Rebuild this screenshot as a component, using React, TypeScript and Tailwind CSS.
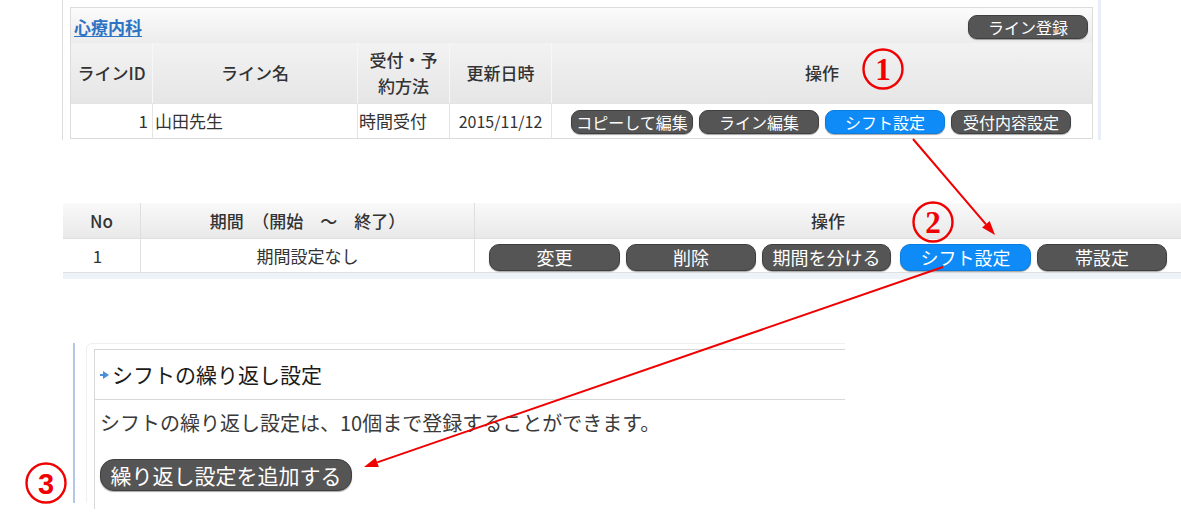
import React from "react";

const font = { fontFamily: '"Noto Sans CJK JP", "Noto Sans", sans-serif' };

function Btn({ children, blue, className = "" }: { children: React.ReactNode; blue?: boolean; className?: string }) {
  return (
    <div
      className={
        "flex items-center justify-center text-white whitespace-nowrap leading-none shadow-[0_1px_1px_rgba(0,0,0,0.35)] " +
        (blue ? "bg-[#0e8bf6] border border-[#0a7de0] " : "bg-[#555555] border border-[#3f3f3f] ") +
        className
      }
    >
      {children}
    </div>
  );
}

function Overlay() {
  return (
    <svg className="absolute left-0 top-0 pointer-events-none" width={1181} height={526} viewBox="0 0 1181 526">
      <circle cx={883} cy={69} r={19.5} fill="none" stroke="#f00000" strokeWidth={2.4} />
      <text x={883} y={80} textAnchor="middle" fill="#f00000" fontSize={31} fontWeight={700} fontFamily='"Liberation Serif", serif'>1</text>
      <circle cx={933} cy={222} r={19.5} fill="none" stroke="#f00000" strokeWidth={2.4} />
      <text x={933} y={233} textAnchor="middle" fill="#f00000" fontSize={31} fontWeight={700} fontFamily='"Liberation Serif", serif'>2</text>
      <circle cx={46} cy={483} r={19.5} fill="none" stroke="#f00000" strokeWidth={2.4} />
      <text x={46} y={494} textAnchor="middle" fill="#f00000" fontSize={29} fontWeight={700} fontFamily='"Liberation Sans", sans-serif'>3</text>
      <line x1={913} y1={139} x2={986} y2={224.3} stroke="#f00000" strokeWidth={2} />
      <polygon points="995,235 982.1,227.55 989.7,221.05" fill="#f00000" />
      <line x1={943} y1={267} x2={377.2} y2={462.4} stroke="#f00000" strokeWidth={2} />
      <polygon points="364,467 375.6,457.7 378.8,467.1" fill="#f00000" />
    </svg>
  );
}

export default function App() {
  return (
    <div className="relative w-[1181px] h-[526px] bg-white overflow-hidden text-[#333]" style={font}>
      {/* Section 1 */}
      <div className="flex h-[140px]">
        <div className="w-[62px]" />
        <div className="w-px bg-[#dcdcdc]" />
        <div className="pl-[7px] pt-[7px]">
          <div className="w-[1023px] border border-[#dcdcdc] bg-white">
            <div className="h-[35px] flex items-center justify-between pl-[3px] pr-[4px] bg-gradient-to-b from-[#fbfbfb] to-[#ececec]">
              <a className="text-[17px] font-bold text-[#2d74c4] underline underline-offset-2 leading-none mt-[1px]">心療内科</a>
              <Btn className="w-[120px] h-[24px] rounded-[9px] text-[16px] mt-[3px]">ライン登録</Btn>
            </div>
            <div className="grid grid-cols-[81px_205px_92px_102px_1fr] h-[60px] bg-gradient-to-b from-[#f2f2f2] to-[#e6e6e6] text-[17px] font-medium text-[#333]">
              <div className="flex items-center justify-center">ラインID</div>
              <div className="flex items-center justify-center border-l border-[#f7f7f7]">ライン名</div>
              <div className="flex flex-col items-center justify-center border-l border-[#f7f7f7] leading-[26px]">
                <span>受付・予</span>
                <span>約方法</span>
              </div>
              <div className="flex items-center justify-center border-l border-[#f7f7f7]">更新日時</div>
              <div className="flex items-center justify-center border-l border-[#f7f7f7]">操作</div>
            </div>
            <div className="grid grid-cols-[81px_205px_92px_102px_1fr] h-[35px] text-[17px] border-t border-[#e4e4e4]">
              <div className="flex items-center justify-end pr-[4px]">1</div>
              <div className="flex items-center pl-[2px] border-l border-[#e4e4e4]">山田先生</div>
              <div className="flex items-center pl-[1px] border-l border-[#e4e4e4]">時間受付</div>
              <div className="flex items-center justify-center border-l border-[#e4e4e4] text-[16px]">2015/11/12</div>
              <div className="flex items-center pl-[19px] gap-[6px] border-l border-[#e4e4e4] pt-[2px]">
                <Btn className="w-[122px] h-[24px] rounded-[9px] text-[16px]">コピーして編集</Btn>
                <Btn className="w-[120px] h-[24px] rounded-[9px] text-[16px]">ライン編集</Btn>
                <Btn blue className="w-[120px] h-[24px] rounded-[9px] text-[16px]">シフト設定</Btn>
                <Btn className="w-[120px] h-[24px] rounded-[9px] text-[16px]">受付内容設定</Btn>
              </div>
            </div>
          </div>
        </div>
        <div className="ml-[5px] w-[3px] bg-[#e7eef8]" />
      </div>

      {/* Section 2 */}
      <div className="mt-[63px] ml-[63px] w-[1118px]">
        <div className="grid grid-cols-[77px_334px_1fr] h-[35px] bg-gradient-to-b from-[#f9f9f9] to-[#e9e9e9] text-[17px] font-medium text-[#333]">
          <div className="flex items-center justify-center">No</div>
          <div className="flex items-center justify-center border-l border-[#dedede]">期間　（開始　～　終了）</div>
          <div className="flex items-center justify-center border-l border-[#dedede]">操作</div>
        </div>
        <div className="grid grid-cols-[77px_334px_1fr] h-[35px] border-t border-[#e0e0e0] border-b text-[17px]">
          <div className="flex items-center justify-center pr-[8px]">1</div>
          <div className="flex items-center justify-center border-l border-[#e0e0e0]">期間設定なし</div>
          <div className="flex items-center pl-[14px] gap-[6px] border-l border-[#e0e0e0] pt-[3px]">
            <Btn className="w-[131px] h-[27px] rounded-[10px] text-[18px]">変更</Btn>
            <Btn className="w-[130px] h-[27px] rounded-[10px] text-[18px]">削除</Btn>
            <Btn className="w-[129px] h-[27px] rounded-[10px] text-[18px]">期間を分ける</Btn>
            <Btn blue className="w-[131px] h-[27px] rounded-[10px] text-[18px] ml-[3px]">シフト設定</Btn>
            <Btn className="w-[130px] h-[27px] rounded-[10px] text-[18px]">帯設定</Btn>
          </div>
        </div>
        <div className="h-[6px] bg-[#eef3fa]" />
      </div>

      {/* Section 3 */}
      <div className="mt-[64px] flex h-[160px]">
        <div className="w-[73px]" />
        <div className="w-[2px] bg-[#b5c7e4]" />
        <div className="ml-[11px] pl-[7px] pt-[5px] border-l border-t border-[#f0f0f0] rounded-tl-[6px]">
          <div className="w-[751px] h-[160px] border-l border-t border-[#d8d8d8]">
            <div className="h-[50px] flex items-center pl-[5px] border-b border-[#d8d8d8]">
              <svg width="9" height="8" viewBox="0 0 9 8" className="mr-[3px] mt-[1px]">
                <rect x="0" y="3" width="4" height="2" fill="#4a90d9" />
                <polygon points="3,0 9,4 3,8" fill="#4a90d9" />
              </svg>
              <span className="text-[21px] text-[#1a1a1a] leading-none">シフトの繰り返し設定</span>
            </div>
            <div className="pl-[5px] pt-[8px]">
              <div className="text-[20px] leading-[30px] text-[#3a3a3a]">シフトの繰り返し設定は、10個まで登録することができます。</div>
              <Btn className="mt-[21px] w-[252px] h-[32px] rounded-[14px] text-[21px]">繰り返し設定を追加する</Btn>
            </div>
          </div>
        </div>
      </div>

      <Overlay />
    </div>
  );
}
